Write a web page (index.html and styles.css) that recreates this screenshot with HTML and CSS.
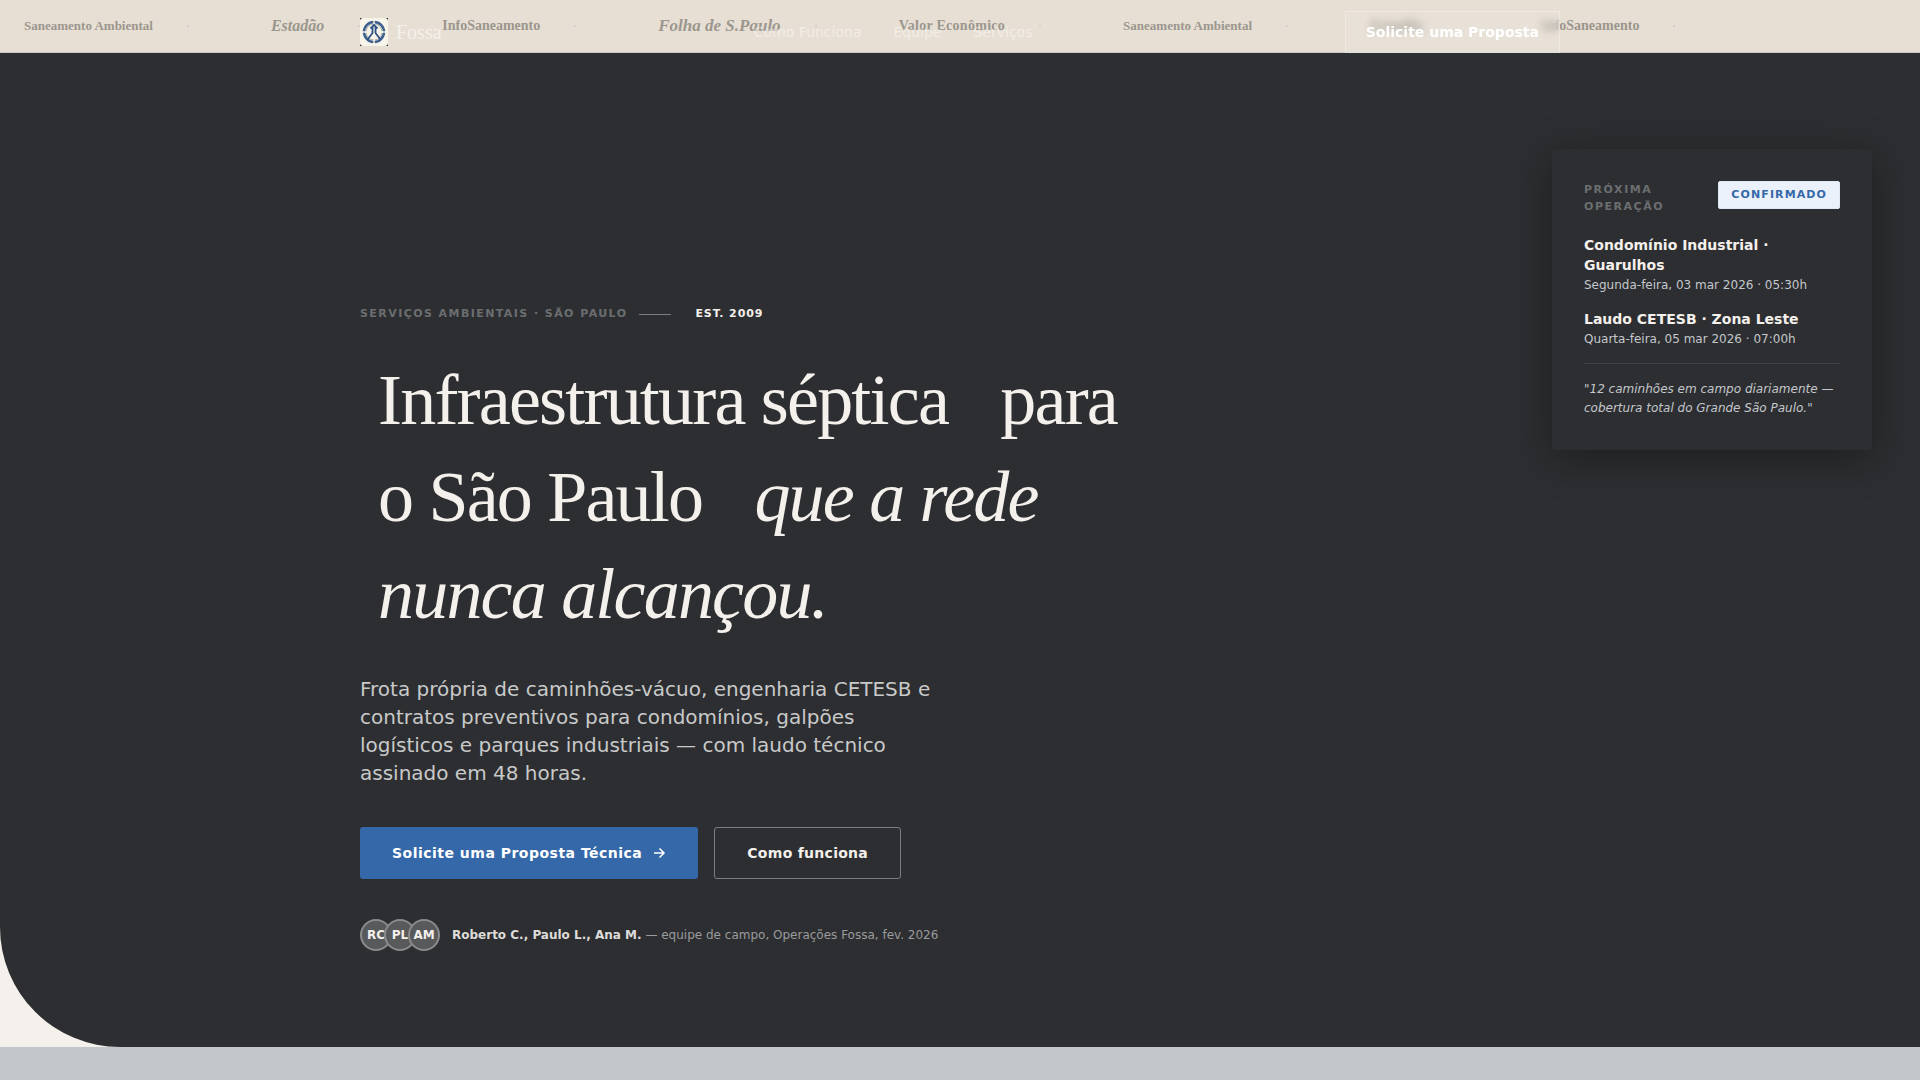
FILE: index.html
```html
<!DOCTYPE html>
<html lang="pt-BR">
<head>
  <meta charset="UTF-8" />
  <meta name="viewport" content="width=device-width, initial-scale=1.0"/>
  <title>Fossa</title>
  <link rel="stylesheet" href="styles.css">
</head>
<body>

<!-- Press ticker -->
<section class="ticker">
  <ul class="ticker-track">
    <li class="small">Saneamento Ambiental</li>
    <li class="italic">Estadão</li>
    <li>InfoSaneamento</li>
    <li class="italic large">Folha de S.Paulo</li>
    <li class="wide">Valor Econômico</li>
    <li class="small">Saneamento Ambiental</li>
    <li class="italic">Estadão</li>
    <li>InfoSaneamento</li>
  </ul>
</section>

<!-- Header -->
<header class="site-header">
  <div class="container header-inner">
    <a class="brand" href="#">
      <svg class="logo" viewBox="0 0 28 28" aria-hidden="true">
        <rect width="28" height="28" fill="#111"/>
        <rect width="28" height="28" rx="3" fill="#f7f4e9"/>
        <circle cx="14" cy="14" r="10" fill="none" stroke="#3c5f8f" stroke-width="2.5"/>
        <circle cx="14" cy="14" r="8" fill="none" stroke="#a9b2a8" stroke-width="1"/>
        <path d="M14 2v4M2 14h5M21 14h5M14 18v8" stroke="#f7f4e9" stroke-width="1.5"/>
        <path d="M10.5 10.5 14 7l3.5 3.5M12.5 9v6l-5 6.5M15.5 9v6l5 6.5" fill="none" stroke="#2f5285" stroke-width="1.8"/>
      </svg>
      <span>Fossa</span>
    </a>
    <nav class="site-nav">
      <a href="#como">Como Funciona</a>
      <a href="#equipe">Equipe</a>
      <a href="#servicos">Serviços</a>
    </nav>
    <a class="header-cta" href="#proposta">Solicite uma Proposta</a>
  </div>
</header>

<main>
  <!-- Hero -->
  <section class="hero">
    <div class="container">
      <p class="eyebrow">
        <span class="label">Serviços Ambientais · São Paulo</span>
        <span class="rule"></span>
        <span class="est">Est. 2009</span>
      </p>
      <h1><span>Infraestrutura séptica</span> <span>para o São Paulo</span> <em>que a rede nunca alcançou.</em></h1>
      <p class="lead">Frota própria de caminhões-vácuo, engenharia CETESB e contratos preventivos para condomínios, galpões logísticos e parques industriais — com laudo técnico assinado em 48 horas.</p>
      <div class="actions">
        <a class="btn btn-primary" href="#proposta">Solicite uma Proposta Técnica
          <svg viewBox="0 0 14 14" aria-hidden="true"><path d="M2 7h10M7.5 2.5 12 7l-4.5 4.5" fill="none" stroke="currentColor" stroke-width="1.5"/></svg>
        </a>
        <a class="btn btn-outline" href="#como">Como funciona</a>
      </div>
      <div class="team">
        <div class="avatars">
          <span>RC</span>
          <span>PL</span>
          <span>AM</span>
        </div>
        <p><strong>Roberto C., Paulo L., Ana M.</strong> — equipe de campo, Operações Fossa, fev. 2026</p>
      </div>
    </div>

    <!-- Schedule card floating over the hero -->
    <aside class="card">
      <div class="card-head">
        <span class="label">Próxima Operação</span>
        <span class="badge">Confirmado</span>
      </div>
      <ul>
        <li>
          <strong>Condomínio Industrial · Guarulhos</strong>
          <span>Segunda-feira, 03 mar 2026 · 05:30h</span>
        </li>
        <li>
          <strong>Laudo CETESB · Zona Leste</strong>
          <span>Quarta-feira, 05 mar 2026 · 07:00h</span>
        </li>
      </ul>
      <p class="quote">"12 caminhões em campo diariamente — cobertura total do Grande São Paulo."</p>
    </aside>
  </section>
</main>

<section class="next"></section>

</body>
</html>
```
FILE: styles.css
```css
/* Base styles */
* {
  box-sizing: border-box;
}

body {
  margin: 0;
  min-height: 100vh;
  display: flex;
  flex-direction: column;
  font-family: "DejaVu Sans", sans-serif;
  background: #f4f0eb;
  color: #f4f0eb;
}

h1, p, ul {
  margin: 0;
  padding: 0;
}

ul {
  list-style: none;
}

a {
  color: inherit;
  text-decoration: none;
}

.container {
  width: 100%;
  max-width: 1200px;
  margin: 0 auto;
}

/* Ticker */
.ticker {
  overflow: hidden;
  background: #e7dfd4;
  border-bottom: 1px solid #c3c7cb;
  padding: 14px 0;
}

.ticker-track {
  display: flex;
  align-items: center;
  width: max-content;
  height: 24px;
  padding-left: 24px;
  font-family: "Liberation Serif", serif;
  font-size: 14px;
  font-weight: bold;
  line-height: 24px;
  color: #9b968e;
}

.ticker-track li {
  display: flex;
  align-items: center;
}

.ticker-track li::after {
  content: "";
  width: 2px;
  height: 2px;
  margin: 0 82px 0 34px;
  border-radius: 50%;
  background: #cfcdc8;
}

.ticker-track .small {
  font-size: 13px;
}

.ticker-track .italic {
  font-size: 16px;
  font-style: italic;
}

.ticker-track .large {
  font-size: 17px;
}

.ticker-track .wide {
  letter-spacing: 0.02em;
}

/* Header */
.site-header {
  position: absolute;
  top: 0;
  left: 0;
  right: 0;
}

.header-inner {
  display: flex;
  align-items: center;
  justify-content: space-between;
  height: 64px;
}

.brand {
  display: flex;
  align-items: center;
  gap: 8px;
  font-family: "Liberation Serif", serif;
  font-size: 20px;
}

.logo {
  width: 28px;
  height: 28px;
}

.site-nav {
  display: flex;
  gap: 32px;
  font-size: 14px;
  color: rgba(255, 255, 255, 0.45);
}

.header-cta {
  padding: 0 20px;
  border: 1px solid rgba(255, 255, 255, 0.3);
  background: rgba(255, 255, 255, 0.08);
  backdrop-filter: blur(4px);
  font-size: 14px;
  font-weight: bold;
  line-height: 40px;
  color: #fff;
}

/* Hero */
.hero {
  position: relative;
  padding: 249px 0 96px;
  background: #2d2e31;
  border-bottom-left-radius: 120px;
}

.label {
  font-size: 11px;
  font-weight: bold;
  letter-spacing: 0.14em;
  text-transform: uppercase;
  color: #6b6e70;
}

.eyebrow {
  display: flex;
  align-items: center;
  gap: 12px;
  line-height: 24px;
}

.eyebrow .label {
  letter-spacing: 0.13em;
}

.rule {
  width: 32px;
  height: 1px;
  background: #7b7d80;
}

.est {
  margin-left: 12px;
  font-size: 11px;
  font-weight: bold;
  letter-spacing: 0.08em;
  text-transform: uppercase;
}

h1 {
  max-width: 800px;
  margin: 26px 0 32px;
  font-family: "Liberation Serif", serif;
  font-size: 72px;
  font-weight: normal;
  line-height: 97px;
  letter-spacing: -0.025em;
}

h1 span,
h1 em {
  padding: 0 18px;
  -webkit-box-decoration-break: clone;
  box-decoration-break: clone;
}

.lead {
  max-width: 580px;
  font-size: 20px;
  line-height: 28px;
  color: #c8c9c9;
}

/* Buttons */
.actions {
  display: flex;
  gap: 16px;
  margin: 40px 0;
}

.btn {
  display: flex;
  align-items: center;
  gap: 10px;
  height: 52px;
  padding: 0 32px;
  border-radius: 3px;
  font-size: 14px;
  font-weight: bold;
  letter-spacing: 0.02em;
}

.btn svg {
  width: 14px;
  height: 14px;
}

.btn-primary {
  background: #3568a8;
  color: #fff;
  letter-spacing: 0.035em;
}

.btn-outline {
  border: 1px solid #7b7d80;
}

/* Team */
.team {
  display: flex;
  align-items: center;
  gap: 12px;
  font-size: 12px;
  color: #9a9b9c;
}

.team strong {
  color: #dedcd9;
}

.avatars {
  display: flex;
}

.avatars span {
  display: flex;
  align-items: center;
  justify-content: center;
  width: 32px;
  height: 32px;
  border: 2px solid rgba(255, 255, 255, 0.3);
  border-radius: 50%;
  background: #58595b;
  color: #f4f0eb;
  font-weight: bold;
}

.avatars span + span {
  margin-left: -8px;
}

/* Schedule card */
.card {
  position: absolute;
  top: 96px;
  right: 48px;
  width: 320px;
  padding: 32px;
  border-radius: 4px;
  background: #2d2e31;
  box-shadow: 0 8px 40px rgba(0, 0, 0, 0.35);
}

.card-head {
  display: flex;
  align-items: flex-start;
  justify-content: space-between;
  gap: 16px;
  margin-bottom: 20px;
  line-height: 17px;
}

.badge {
  padding: 4px 12px 5px;
  border: 1px solid #dfe8f5;
  border-radius: 2px;
  background: #ebf1fa;
  color: #3568a8;
  font-size: 11px;
  font-weight: bold;
  letter-spacing: 0.1em;
  text-transform: uppercase;
}

.card li {
  margin-bottom: 14px;
  line-height: 20px;
}

.card li strong,
.card li span {
  display: block;
}

.card li strong {
  font-size: 14px;
}

.card li span {
  font-size: 12px;
  color: #c3c7cb;
}

.quote {
  padding-top: 16px;
  border-top: 1px solid #424347;
  font-size: 12px;
  font-style: italic;
  line-height: 19px;
  color: #c3c7cb;
}

/* Next section */
.next {
  flex: 1;
  background: #c3c7cb;
}

/* Media Queries */
@media (max-width: 1240px) {
  .container {
    padding: 0 24px;
  }

  .card {
    position: static;
    margin: 40px 24px 0;
  }
}
```
